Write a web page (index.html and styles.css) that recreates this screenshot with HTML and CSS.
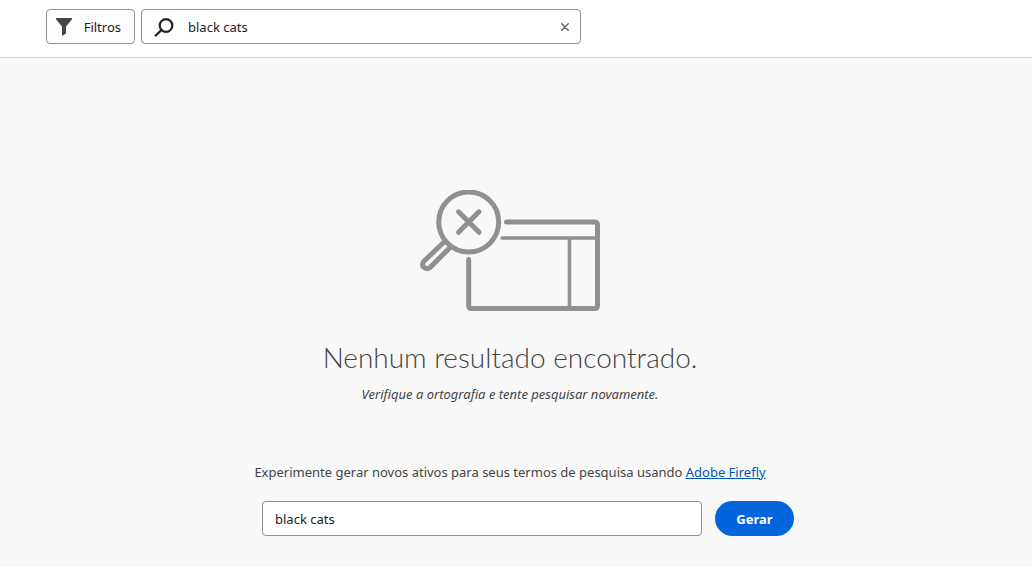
FILE: index.html
```html
<!DOCTYPE html>
<html lang="pt-BR">
<head>
<meta charset="utf-8">
<meta name="viewport" content="width=device-width, initial-scale=1">
<title>black cats</title>
<link rel="stylesheet" href="styles.css">
</head>
<body>
<header class="toolbar">
  <button class="filter-button" type="button">
    <svg class="filter-icon" width="18" height="18" viewBox="0 0 18 18" aria-hidden="true"><path d="M1 0h16v1.200L11 8.500v7L7 18V8.500L1 1.200z" fill="#464646"/></svg>
    <span>Filtros</span>
  </button>
  <form class="search" role="search">
    <svg class="search-icon" width="20" height="20" viewBox="0 0 20 20" aria-hidden="true"><circle cx="12" cy="8.500" r="6.300" fill="none" stroke="#222" stroke-width="2.200"/><path d="M7.500 13L1.800 18.500" stroke="#222" stroke-width="2.400" stroke-linecap="round"/></svg>
    <input class="search-input" type="text" value="black cats" aria-label="Pesquisar">
    <button class="clear-button" type="button" aria-label="Limpar">
      <svg width="8" height="8" viewBox="0 0 8 8" aria-hidden="true"><path d="M.8.8l6.400 6.400M7.200.8L.8 7.200" stroke="#666" stroke-width="1.500" stroke-linecap="round"/></svg>
    </button>
  </form>
</header>
<main class="results">
  <svg class="illustration" width="180" height="122" viewBox="0 0 180 122" fill="none" stroke="#909090" stroke-linecap="round" aria-hidden="true">
    <circle cx="48.700" cy="32" r="30" stroke-width="5"/>
    <path d="M38.500 21.800L59 42.300M59 21.800L38.500 42.300" stroke-width="5"/>
    <path d="M24.500 51.500L3.800 71.500Q1.500 74.500 3.500 77Q6.500 80 10 77.500L30.500 57" stroke-width="5" stroke-linecap="butt"/>
    <path d="M86.500 32H174.500Q177.500 32 177.500 35V115.500Q177.500 118.500 174.500 118.500H51.700Q48.700 118.500 48.700 115.500V69.500" stroke-width="5"/>
    <path d="M82 48H177M149.500 48V118" stroke-width="3.600"/>
  </svg>
  <h1 class="title">Nenhum resultado encontrado.</h1>
  <p class="hint">Verifique a ortografia e tente pesquisar novamente.</p>
  <p class="prompt">Experimente gerar novos ativos para seus termos de pesquisa usando <a class="link" href="#">Adobe Firefly</a></p>
  <form class="generate">
    <input class="generate-input" type="text" value="black cats" aria-label="Termos para gerar">
    <button class="generate-button" type="button">Gerar</button>
  </form>
</main>
</body>
</html>
```
FILE: styles.css
```css
* {
  box-sizing: border-box;
}

body {
  display: flex;
  flex-direction: column;
  min-height: 100vh;
  margin: 0;
  background: #f8f8f8;
  color: #444;
  font: 13px/20px "Noto Sans", "Open Sans", sans-serif;
}

button,
input {
  margin: 0;
  font: inherit;
}

.toolbar {
  display: flex;
  gap: 6px;
  padding: 9px 46px 13px;
  border-bottom: 1px solid #d3d3d3;
  background: #fff;
}

.filter-button {
  display: flex;
  align-items: center;
  justify-content: space-between;
  width: 89px;
  height: 35px;
  padding: 0 13px 0 8px;
  border: 1px solid #909090;
  border-radius: 4px;
  background: #fdfdfd;
  color: #222;
}

.search {
  display: flex;
  align-items: center;
  flex: 0 1 440px;
  height: 35px;
  padding: 0 4px 0 12px;
  border: 1px solid #909090;
  border-radius: 4px;
}

.search-icon,
.filter-icon {
  flex: none;
}

.search-input {
  flex: 1;
  min-width: 0;
  padding: 0 0 0 14px;
  border: 0;
  outline: 0;
  background: transparent;
  color: #222;
}

.clear-button {
  display: flex;
  align-items: center;
  justify-content: center;
  width: 22px;
  height: 24px;
  padding: 0;
  border: 0;
  background: transparent;
}

.results {
  display: flex;
  flex-direction: column;
  align-items: center;
  padding: 132px 12px 31px 0;
}

.title {
  margin: 25px 0 0;
  font-family: Lato, "Noto Sans", sans-serif;
  font-size: 28px;
  font-weight: 300;
  line-height: 40px;
}

.hint {
  margin: 7px 0 0;
  font-style: italic;
}

.prompt {
  margin: 58px 0 0;
}

.link {
  color: #0054b6;
}

.generate {
  display: flex;
  gap: 13px;
  width: 100%;
  max-width: 568px;
  margin-top: 19px;
  padding-left: 36px;
}

.generate-input {
  flex: 1;
  min-width: 0;
  height: 35px;
  padding: 0 12px;
  border: 1px solid #909090;
  border-radius: 4px;
  background: #fff;
  color: #222;
}

.generate-button {
  width: 79px;
  height: 35px;
  padding: 0;
  border: 0;
  border-radius: 18px;
  background: #0265dc;
  color: #fff;
  font-weight: 700;
}
```
